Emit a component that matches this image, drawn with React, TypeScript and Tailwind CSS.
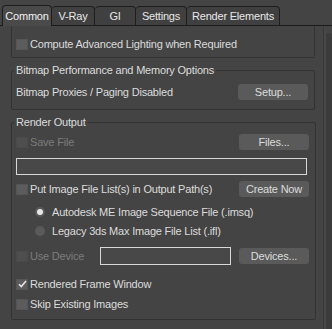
import React from 'react';

const tabs = [
  { label: 'Common', w: 'w-[50px]', active: true },
  { label: 'V-Ray', w: 'w-[43px]' },
  { label: 'GI', w: 'w-[41px]' },
  { label: 'Settings', w: 'w-[51px]' },
  { label: 'Render Elements', w: 'w-[93px]' },
];

const Check = ({ checked = false, disabled = false }: { checked?: boolean; disabled?: boolean }) => (
  <span
    className={`w-[12px] h-[11px] shrink-0 flex items-center justify-center border ${
      disabled ? 'bg-[#4e4e4e] border-[#4a4a4a]' : 'bg-[#5c5c5c] border-[#555555]'
    }`}
  >
    {checked && (
      <svg width="9" height="8" viewBox="0 0 9 8">
        <path d="M1 4.2 L3.3 6.5 L8 1" fill="none" stroke="#e4e4e4" strokeWidth="1.6" />
      </svg>
    )}
  </span>
);

const Radio = ({ on = false }: { on?: boolean }) => (
  <span className="w-[10px] h-[10px] rounded-full bg-[#5a5a5a] flex items-center justify-center shrink-0">
    {on && <span className="w-[6px] h-[6px] rounded-full bg-[#e8e8e8]" />}
  </span>
);

const Btn = ({ children }: { children: React.ReactNode }) => (
  <button className="w-[70px] h-[16px] rounded-[3px] bg-[#5a5a5a] text-[#dcdcdc] leading-none text-center">
    {children}
  </button>
);

export default function App() {
  return (
    <div
      className="w-[332px] h-[329px] bg-[#444444] flex flex-col overflow-hidden text-[11px] tracking-[-0.2px] text-[#dcdcdc]"
      style={{ fontFamily: '"Liberation Sans", Arial, sans-serif' }}
    >
      {/* tab strip */}
      <div className="h-[26px] shrink-0 flex items-end pl-[2px] border-b border-[#1b1b1b]">
        {tabs.map((t) =>
          t.active ? (
            <div
              key={t.label}
              className={`${t.w} h-[21px] -mb-px flex items-center justify-center bg-[#4a4a4a] border-x border-t border-[#1e1e1e] rounded-t-[4px] text-[#f0f0f0]`}
            >
              {t.label}
            </div>
          ) : (
            <div
              key={t.label}
              className={`${t.w} h-[19px] flex items-center justify-center bg-[#404040] border-r border-t border-[#1e1e1e] rounded-t-[4px] text-[#e8e8e8]`}
            >
              {t.label}
            </div>
          )
        )}
      </div>

      <div className="flex flex-1 min-h-0">
        <div className="w-[323px] pl-[11px]">
          {/* first group, scrolled so its top edge is hidden */}
          <div className="w-[304px] h-[32px] border-x border-b border-[#333333] rounded-b-[2px] pt-[12px] pl-[4px]">
            <div className="flex items-center h-[12px] gap-[2px]">
              <Check />
              <span>Compute Advanced Lighting when Required</span>
            </div>
          </div>

          <fieldset className="w-[304px] mt-[5px] border border-[#333333] rounded-[2px] pl-[4px] pr-[6px] pb-[9px]">
            <legend className="ml-[-2px] px-[2px] leading-[14px]">Bitmap Performance and Memory Options</legend>
            <div className="mt-[7px] h-[16px] flex items-center justify-between">
              <span>Bitmap Proxies / Paging Disabled</span>
              <Btn>Setup...</Btn>
            </div>
          </fieldset>

          <fieldset className="w-[304px] mt-[5px] border border-[#333333] rounded-[2px] pl-[4px] pr-[6px] pb-[7px]">
            <legend className="ml-[-2px] px-[2px] leading-[14px]">Render Output</legend>
            <div className="mt-[5px] h-[16px] flex items-center justify-between">
              <div className="flex items-center gap-[2px] text-[#7c7c7c]">
                <Check disabled />
                <span>Save File</span>
              </div>
              <Btn>Files...</Btn>
            </div>
            <div className="mt-[8px] h-[17px] w-[291px] border border-[#d8d8d8] bg-[#484848]" />
            <div className="mt-[6px] h-[16px] flex items-center justify-between">
              <div className="flex items-center gap-[2px]">
                <Check />
                <span>Put Image File List(s) in Output Path(s)</span>
              </div>
              <Btn>Create Now</Btn>
            </div>
            <div className="mt-[7px] h-[16px] flex items-center gap-[7px] pl-[19px]">
              <Radio on />
              <span>Autodesk ME Image Sequence File (.imsq)</span>
            </div>
            <div className="mt-[3px] h-[16px] flex items-center gap-[7px] pl-[19px]">
              <Radio />
              <span>Legacy 3ds Max Image File List (.ifl)</span>
            </div>
            <div className="mt-[8px] h-[18px] flex items-center">
              <div className="w-[84px] flex items-center gap-[2px] text-[#7c7c7c]">
                <Check disabled />
                <span>Use Device</span>
              </div>
              <div className="w-[131px] h-[18px] border border-[#d8d8d8] bg-[#484848]" />
              <div className="ml-[8px]">
                <Btn>Devices...</Btn>
              </div>
            </div>
            <div className="mt-[11px] h-[16px] flex items-center gap-[2px]">
              <Check checked />
              <span>Rendered Frame Window</span>
            </div>
            <div className="mt-[4px] h-[16px] flex items-center gap-[2px]">
              <Check />
              <span>Skip Existing Images</span>
            </div>
          </fieldset>
        </div>

        {/* scrollbar */}
        <div className="w-[9px] flex border-l border-[#383838]">
          <div className="w-[2px] bg-[#474747]" />
          <div className="flex-1 mt-[7px] rounded-t-[3px] bg-[#3b3b3b]" />
        </div>
      </div>
    </div>
  );
}
